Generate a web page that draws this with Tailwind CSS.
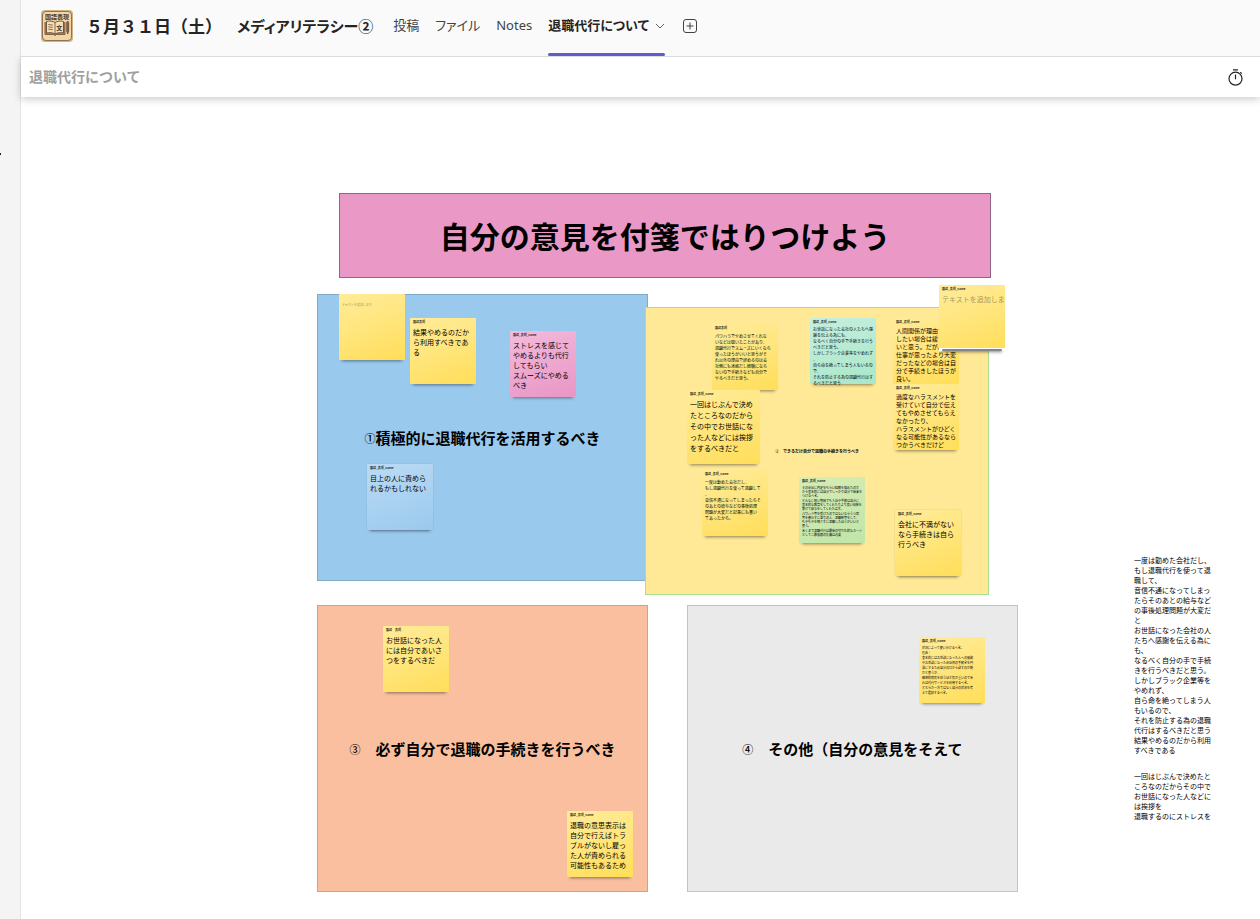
<!DOCTYPE html>
<html lang="ja">
<head>
  <meta charset="UTF-8" />
  <meta name="viewport" content="width=device-width, initial-scale=1.0"/>
  <title>退職代行について</title>
  <script src="https://cdn.jsdelivr.net/npm/@tailwindcss/browser@4"></script>
</head>
<body class="flex h-screen overflow-hidden bg-white font-['Noto_Sans','Noto_Sans_CJK_JP',sans-serif] text-[#242424]">
  <!-- Side rail -->
  <aside class="relative w-[21px] shrink-0 border-r border-[#e3e3e3] bg-[#f4f4f4]">
    <span class="absolute top-[153px] left-0 h-[2px] w-px bg-[#242424]"></span>
  </aside>

  <div class="flex min-w-0 flex-1 flex-col">
    <!-- Channel header -->
    <header class="relative z-20 flex h-[57px] shrink-0 items-center border-b border-[#dcdcdc] bg-[#fafafa] pb-[4px] pl-[20px] whitespace-nowrap">
      <svg class="size-8 shrink-0" viewBox="0 0 32 32" aria-hidden="true">
        <rect width="32" height="32" rx="4" fill="#d3b183"/>
        <rect x="1.5" y="1.5" width="29" height="29" rx="3.5" fill="#f3d6a8" stroke="#94724c" stroke-width="1"/>
        <text x="16" y="8.7" text-anchor="middle" font-size="6" font-weight="700" fill="#4b3425" font-family="Noto Sans CJK JP, sans-serif">国語表現</text>
        <path d="M4 12v12.5h8.500l1.500 1 1.500-1H24V12" fill="#b28a5c" stroke="#6d4c32" stroke-width=".8"/>
        <path d="M5.500 11.500c3-.8 6-.5 8.500 1 2.500-1.500 5.500-1.800 8.500-1v11.500c-3-.7-6-.4-8.500 1-2.500-1.400-5.500-1.700-8.500-1z" fill="#f5dfb8" stroke="#5b3e29" stroke-width=".8"/>
        <path d="M14 12.500V24M7.300 14.500l4.500.6M7.300 16.800l4.500.6M7.300 19.100l4.500.6" stroke="#6d4c32" stroke-width=".8"/>
        <text x="18.300" y="20.300" text-anchor="middle" font-size="6" font-weight="700" fill="#4b3425" font-family="Noto Sans CJK JP, sans-serif">文</text>
        <path d="M25.700 12.500c0-1.500 2-1.500 2 0V21l-1 3-1-3z" fill="#8d6540" stroke="#4b3425" stroke-width=".6"/>
      </svg>
      <h1 class="ml-[13px] flex items-center gap-[15px] font-semibold font-['Noto_Sans_CJK_JP',sans-serif]">
        <span class="text-[17px]">５月３１日（土）</span>
        <span class="text-[15px] [font-feature-settings:'palt']">メディアリテラシー②</span>
      </h1>
      <nav class="ml-[20px] flex items-center gap-[16px] text-[13px] text-[#424242] [font-feature-settings:'palt']">
        <a href="#">投稿</a>
        <a href="#">ファイル</a>
        <a href="#">Notes</a>
        <a href="#" class="relative flex items-center gap-[6px] font-semibold text-[#242424]">
          退職代行について
          <svg class="size-[10px]" viewBox="0 0 10 10" fill="none" stroke="#616161" aria-hidden="true"><path d="M1 3l4 4 4-4"/></svg>
          <span class="absolute inset-x-0 -bottom-[20px] h-[3px] rounded-full bg-[#5b5fc7]"></span>
        </a>
      </nav>
      <button class="ml-[18px]" aria-label="タブを追加">
        <svg class="size-[14px]" viewBox="0 0 14 14" fill="none" stroke="#424242" aria-hidden="true"><rect x=".5" y=".5" width="13" height="13" rx="2.500"/><path d="M7 3.500v7M3.500 7h7"/></svg>
      </button>
    </header>

    <!-- Board title bar -->
    <div class="relative z-10 flex h-[40px] shrink-0 items-center justify-between bg-white pr-[16px] pl-[8px] shadow-[0_2px_8px_rgba(0,0,0,0.22)]">
      <h2 class="pb-[2px] text-sm font-bold text-[#a19f9d] font-['Noto_Sans_CJK_JP',sans-serif]">退職代行について</h2>
      <button aria-label="タイマー">
        <svg class="size-[17px]" viewBox="0 0 17 17" fill="none" stroke="#242424" stroke-width="1.200" aria-hidden="true"><circle cx="8.500" cy="9.700" r="6.500"/><path d="M8.500 5.500v4.700M6 .8h5M13.300 3.200l1.500 1.400"/></svg>
      </button>
    </div>

    <!-- Whiteboard canvas -->
    <main class="relative mt-px flex-1 overflow-hidden bg-white font-['Noto_Sans_CJK_JP',sans-serif] text-black">
      <div class="absolute top-[95px] left-[318px] flex h-[85px] w-[652px] items-center justify-center border border-[#8f6580] bg-[#ea98c6] text-[30px] font-bold">自分の意見を付箋ではりつけよう</div>

      <section class="absolute top-[196px] left-[296px] flex h-[287px] w-[331px] items-center justify-center border border-[#82aac9] bg-[#9ac9ee] pt-[2px] text-[15px] font-bold whitespace-nowrap">
        <span class="text-[11px] font-medium">①</span>積極的に退職代行を活用するべき
      </section>
      <section class="absolute top-[209px] left-[624px] flex h-[288px] w-[344px] items-center justify-center border border-[#aadd8e] bg-[#ffe896] text-[4px] font-bold whitespace-nowrap">
        <span class="font-medium">②</span>　できるだけ自分で退職の手続きを行うべき
      </section>
      <section class="absolute top-[507px] left-[296px] flex h-[287px] w-[331px] items-center justify-center border border-[#cda38f] bg-[#f9bf9f] pt-[2px] text-[15px] font-bold whitespace-nowrap">
        <span class="text-[11px] font-medium">③</span>　必ず自分で退職の手続きを行うべき
      </section>
      <section class="absolute top-[507px] left-[666px] flex h-[287px] w-[331px] items-center justify-center border border-[#c3c3c3] bg-[#eaeaea] pt-[2px] text-[15px] font-bold whitespace-nowrap">
        <span class="text-[11px] font-medium">④</span>　その他（自分の意見をそえて
      </section>

      <!-- Sticky notes: 1 -->
      <article class="absolute top-[196px] left-[318px] flex size-[66px] flex-col gap-[2px] rounded-[1px] bg-linear-160 from-[#ffec99] to-[#ffde57] px-[3px] pt-[9px] whitespace-nowrap shadow-[0_4px_3px_-3px_rgba(0,0,0,0.45)]">
        <p class="text-[3px] leading-[5px] text-[#a89a60]">テキストを追加します</p>
      </article>
      <article class="absolute top-[220px] left-[389px] flex size-[66px] flex-col gap-[2px] rounded-[1px] bg-linear-160 from-[#ffec99] to-[#ffde57] px-[3px] pt-[2px] whitespace-nowrap shadow-[0_4px_3px_-3px_rgba(0,0,0,0.45)]">
        <h3 class="text-[3px] leading-[5px] font-medium">国語表現</h3>
        <p class="text-[7px] leading-[10px]">結果やめるのだか<br>ら利用すべきであ<br>る</p>
      </article>
      <article class="absolute top-[233px] left-[489px] flex size-[66px] flex-col gap-[2px] rounded-[1px] bg-linear-160 from-[#f2bbdb] to-[#e995c5] px-[3px] pt-[2px] whitespace-nowrap shadow-[0_4px_3px_-3px_rgba(0,0,0,0.45)]">
        <h3 class="text-[3px] leading-[5px] font-medium">国語_表現_name</h3>
        <p class="text-[7px] leading-[10px]">ストレスを感じて<br>やめるよりも代行<br>してもらい<br>スムーズにやめる<br>べき</p>
      </article>
      <article class="absolute top-[366px] left-[346px] flex size-[66px] flex-col gap-[2px] rounded-[1px] bg-linear-160 from-[#bbdbf4] to-[#9ac9ee] px-[3px] pt-[2px] whitespace-nowrap shadow-[0_0_1px_rgba(0,0,0,0.35),0_4px_3px_-3px_rgba(0,0,0,0.45)]">
        <h3 class="text-[3px] leading-[5px] font-medium">国語_表現_name</h3>
        <p class="text-[7px] leading-[10px]">目上の人に責めら<br>れるかもしれない</p>
      </article>

      <!-- Sticky notes: 2 -->
      <article class="absolute top-[226px] left-[691px] flex size-[66px] flex-col gap-[2px] rounded-[1px] bg-linear-160 from-[#ffec99] to-[#ffde57] px-[3px] pt-[2px] whitespace-nowrap shadow-[0_4px_3px_-3px_rgba(0,0,0,0.45)]">
        <h3 class="text-[3px] leading-[5px] font-medium">国語表現</h3>
        <p class="text-[4px] leading-[6px]">パワハラでやめさせてくれな<br>いなどは聞いたことがあり、<br>退職代行でスムーズにいくなら<br>使ったほうがいいと思うがそ<br>れ以外の理由で辞めるのは会<br>社側にも迷惑だし経験になら<br>ないので手続きなども自分で<br>やるべきだと思う。</p>
      </article>
      <article class="absolute top-[220px] left-[789px] flex size-[66px] flex-col gap-px rounded-[1px] bg-linear-160 from-[#c6efde] to-[#a9e7c9] px-[3px] pt-[2px] whitespace-nowrap shadow-[0_4px_3px_-3px_rgba(0,0,0,0.45)]">
        <h3 class="text-[3px] leading-[5px] font-medium">国語_表現_name</h3>
        <p class="text-[4px] leading-[6px]">お世話になった会社の人たちへ感<br>謝を伝える為にも、<br>なるべく自分の手で手続きを行う<br>べきだと思う。<br>しかしブラック企業等をやめれず<br>、<br>自ら命を絶ってしまう人もいるの<br>で、<br>それを防止する為の退職代行はす<br>るべきだと思う</p>
      </article>
      <article class="absolute top-[372px] left-[681px] flex size-[66px] flex-col gap-[2px] rounded-[1px] bg-linear-160 from-[#ffec99] to-[#ffde57] px-[3px] pt-[2px] whitespace-nowrap shadow-[0_4px_3px_-3px_rgba(0,0,0,0.45)]">
        <h3 class="text-[3px] leading-[5px] font-medium">国語_表現_name</h3>
        <p class="text-[4px] leading-[6px]">一度は勤めた会社だし、<br>もし退職代行を使って退職して<br>、<br>音信不通になってしまったらそ<br>のあとの給与などの事後処理<br>問題が大変だと記事にも書い<br>てあったから。</p>
      </article>
      <article class="absolute top-[292px] left-[666px] flex h-[74px] w-[73px] flex-col gap-[2px] rounded-[1px] bg-linear-160 from-[#ffec99] to-[#ffde57] px-[3px] pt-[2px] whitespace-nowrap shadow-[0_4px_3px_-3px_rgba(0,0,0,0.45)]">
        <h3 class="text-[3px] leading-[5px] font-medium">国語_表現_name</h3>
        <p class="text-[7px] leading-[11px]">一回はじぶんで決め<br>たところなのだから<br>その中でお世話にな<br>った人などには挨拶<br>をするべきだと</p>
      </article>
      <article class="absolute top-[379px] left-[778px] flex size-[66px] flex-col gap-[2px] rounded-[1px] bg-linear-160 from-[#d7ecb6] to-[#bfe6a8] px-[3px] pt-[2px] whitespace-nowrap shadow-[0_4px_3px_-3px_rgba(0,0,0,0.45)]">
        <h3 class="text-[3px] leading-[5px] font-medium">国語_表現_name</h3>
        <div class="flex flex-col gap-px text-[3px] leading-[4px]">
          <p>その会社に内定をもらい経験を積めたのだ<br>から基本的には自分でしっかり自分で始末を<br>つけるべき。</p>
          <p>どんなに短い期間でも入社や手続は自分に<br>基本的な教育をしてくれたりより良い関係を<br>築けて給与をしてくれたはず。</p>
          <p>パワハラ等を受けたのではないならうつ病<br>等を患わすに至りの人、退職願等をして、<br>もやもやを残さずに退職したほうがいいと<br>思う。</p>
          <p>あくまで退職代行は最後の切り札的なカード<br>としてご最低限の礼儀は必要</p>
        </div>
      </article>
      <article class="absolute top-[220px] left-[872px] flex size-[66px] flex-col gap-[2px] rounded-[1px] bg-linear-160 from-[#ffec99] to-[#ffde57] px-[3px] pt-[2px] whitespace-nowrap shadow-[0_4px_3px_-3px_rgba(0,0,0,0.45)]">
        <h3 class="text-[3px] leading-[5px] font-medium">国語_表現_name</h3>
        <p class="text-[6px] leading-[8px]">人間関係が理由で<br>したい場合は緩っ<br>いと思う。だが、<br>仕事が思ったより大変<br>だったなどの場合は自<br>分で手続きしたほうが<br>良い。</p>
      </article>
      <article class="absolute top-[286px] left-[872px] flex size-[66px] flex-col gap-[2px] rounded-[1px] bg-linear-160 from-[#ffec99] to-[#ffde57] px-[3px] pt-[2px] whitespace-nowrap shadow-[0_4px_3px_-3px_rgba(0,0,0,0.45)]">
        <h3 class="text-[3px] leading-[5px] font-medium">国語_表現_name</h3>
        <p class="text-[6px] leading-[8px]">過度なハラスメントを<br>受けていて自分で伝え<br>てもやめさせてもらえ<br>なかったり、<br>ハラスメントがひどく<br>なる可能性があるなら<br>つかうべきだけど</p>
      </article>
      <!-- Note being edited -->
      <article class="absolute top-[187px] left-[918px] flex size-[66px] flex-col gap-[2px] rounded-[1px] bg-linear-160 from-[#ffec99] to-[#ffde57] pt-[2px] pl-[3px] whitespace-nowrap shadow-[0_4px_3px_-3px_rgba(0,0,0,0.45)]">
        <h3 class="text-[3px] leading-[5px] font-medium">国語_表現_name</h3>
        <p class="overflow-hidden text-[7px] leading-[10px] text-[#a89a60]">テキストを追加します</p>
        <div class="absolute inset-x-0 bottom-0 flex h-[3px] items-center bg-white px-[3px]"><span class="h-[2px] flex-1 rounded-full bg-[#858585]"></span></div>
      </article>
      <article class="absolute top-[412px] left-[874px] flex size-[66px] flex-col gap-[2px] rounded-[1px] bg-linear-160 from-[#ffec99] to-[#ffde57] px-[3px] pt-[2px] whitespace-nowrap shadow-[0_0_1px_rgba(0,0,0,0.35),0_4px_3px_-3px_rgba(0,0,0,0.45)]">
        <h3 class="text-[3px] leading-[5px] font-medium">国語_表現_name</h3>
        <p class="text-[7px] leading-[10px]">会社に不満がない<br>なら手続きは自ら<br>行うべき</p>
      </article>

      <!-- Sticky notes: 3 -->
      <article class="absolute top-[528px] left-[362px] flex size-[66px] flex-col gap-[2px] rounded-[1px] bg-linear-160 from-[#ffec99] to-[#ffde57] px-[3px] pt-[2px] whitespace-nowrap shadow-[0_4px_3px_-3px_rgba(0,0,0,0.45)]">
        <h3 class="text-[3px] leading-[5px] font-medium">国語　表現</h3>
        <p class="text-[7px] leading-[10px]">お世話になった人<br>には自分であいさ<br>つをするべきだ</p>
      </article>
      <article class="absolute top-[713px] left-[546px] flex size-[66px] flex-col gap-[2px] rounded-[1px] bg-linear-160 from-[#ffec99] to-[#ffde57] px-[3px] pt-[2px] whitespace-nowrap shadow-[0_4px_3px_-3px_rgba(0,0,0,0.45)]">
        <h3 class="text-[3px] leading-[5px] font-medium">国語_表現_name</h3>
        <p class="text-[7px] leading-[10px]">退職の意思表示は<br>自分で行えばトラ<br>ブルがないし雇っ<br>た人が責められる<br>可能性もあるため</p>
      </article>

      <!-- Sticky notes: 4 -->
      <article class="absolute top-[539px] left-[898px] flex size-[66px] flex-col gap-[2px] rounded-[1px] bg-linear-160 from-[#ffec99] to-[#ffde57] px-[3px] pt-[2px] whitespace-nowrap shadow-[0_4px_3px_-3px_rgba(0,0,0,0.45)]">
        <h3 class="text-[3px] leading-[5px] font-medium">国語_表現_name</h3>
        <p class="text-[3px] leading-[5px]">状況によって使い分けるべき。<br>理由：<br>基本的にはお世話になった人への感謝<br>やお世話になった会社側の手続きを円<br>滑にするため自分の口から話すのが筋<br>だと思うが、<br>精神的病気を伴うほど気が重いのであ<br>れば代行サービスを利用するべき。<br>どちらか一方ではなく自分の状況を考<br>えて選択するべき。</p>
      </article>

      <!-- Loose text -->
      <div class="absolute top-[457px] left-[1113px] flex flex-col gap-[16px] text-[7px] leading-[10px] whitespace-nowrap">
        <p>一度は勤めた会社だし、<br>もし退職代行を使って退<br>職して、<br>音信不通になってしまっ<br>たらそのあとの給与など<br>の事後処理問題が大変だ<br>と<br>お世話になった会社の人<br>たちへ感謝を伝える為に<br>も、<br>なるべく自分の手で手続<br>きを行うべきだと思う。<br>しかしブラック企業等を<br>やめれず、<br>自ら命を絶ってしまう人<br>もいるので、<br>それを防止する為の退職<br>代行はするべきだと思う<br>結果やめるのだから利用<br>すべきである</p>
        <p>一回はじぶんで決めたと<br>ころなのだからその中で<br>お世話になった人などに<br>は挨拶を<br>退職するのにストレスを</p>
      </div>
    </main>
  </div>
</body>
</html>
